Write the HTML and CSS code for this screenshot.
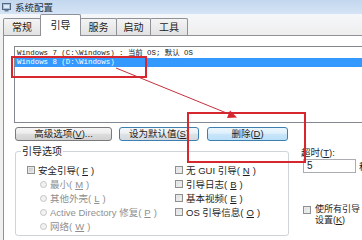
FILE: index.html
```html
<!DOCTYPE html>
<html lang="zh-CN">
<head>
    <meta charset="UTF-8">
    <title>系统配置</title>
    <link rel="stylesheet" href="styles.css">
</head>
<body>
    <div class="window">
        <div class="titlebar">
            <svg class="app-icon" width="9" height="9" viewBox="0 0 9 9">
                <rect x="0.5" y="0.5" width="8" height="6" fill="#9fbfdf" stroke="#56677d"/>
                <rect x="2" y="2" width="5" height="3" fill="#dbe9f7"/>
                <rect x="2.5" y="7" width="4" height="1.5" fill="#6d7f95"/>
            </svg>
            <span class="title">系统配置</span>
        </div>

        <div class="tabs">
            <div class="tab t1">常规</div>
            <div class="tab t2 active">引导</div>
            <div class="tab t3">服务</div>
            <div class="tab t4">启动</div>
            <div class="tab t5">工具</div>
        </div>

        <div class="panel">
            <div class="os-list">
                <div class="os-item">Windows 7 (C:\Windows) : 当前 OS; 默认 OS</div>
                <div class="os-item selected">Windows 8 (D:\Windows)</div>
            </div>

            <div class="button-row">
                <button class="btn btn-advanced">高级选项(<u>V</u>)...</button>
                <button class="btn btn-default">设为默认值(<u>S</u>)</button>
                <button class="btn btn-hot">删除(<u>D</u>)</button>
            </div>

            <div class="lower">
                <fieldset class="group">
                    <legend>引导选项</legend>
                    <div class="opt-grid">
                        <div class="col">
                            <div class="opt"><span class="check"></span>安全引导(<u>F</u>)</div>
                            <div class="opt sub disabled"><span class="radio"></span>最小(<u>M</u>)</div>
                            <div class="opt sub disabled"><span class="radio"></span>其他外壳(<u>L</u>)</div>
                            <div class="opt sub disabled"><span class="radio"></span>Active Directory 修复(<u>P</u>)</div>
                            <div class="opt sub disabled"><span class="radio"></span>网络(<u>W</u>)</div>
                        </div>
                        <div class="col">
                            <div class="opt"><span class="check light"></span>无 GUI 引导(<u>N</u>)</div>
                            <div class="opt"><span class="check light"></span>引导日志(<u>B</u>)</div>
                            <div class="opt"><span class="check light"></span>基本视频(<u>E</u>)</div>
                            <div class="opt"><span class="check light"></span>OS 引导信息(<u>O</u>)</div>
                        </div>
                    </div>
                </fieldset>

                <div class="side">
                    <div class="timeout-label">超时(<u>T</u>):</div>
                    <div class="timeout-row">
                        <div class="textbox">5</div>
                        <span class="unit">秒</span>
                    </div>
                    <div class="persist">
                        <span class="check light"></span>
                        <span class="persist-text">使所有引导设置(<u>K</u>)</span>
                    </div>
                </div>
            </div>
        </div>

        <!-- red marks drawn over the screenshot -->
        <svg class="annotations" width="362" height="240" viewBox="0 0 362 240">
            <rect x="12" y="57" width="134" height="20" fill="none" stroke="#d8262f" stroke-width="2"/>
            <rect x="188" y="113" width="117" height="49" fill="none" stroke="#d8262f" stroke-width="2"/>
            <line x1="116" y1="68" x2="229" y2="114" stroke="#c4313e" stroke-width="1"/>
            <polygon points="237,117.5 227,118 230,110.5" fill="#d8262f"/>
        </svg>
    </div>
</body>
</html>
```

FILE: styles.css
```css
* {
    box-sizing: border-box;
}

body {
    margin: 0;
    background: #f0f0f0;
    font-family: "Liberation Sans", "Noto Sans CJK SC", sans-serif;
    font-size: 9.5px;
    color: #1e1e1e;
}

u {
    text-decoration: underline;
}

.window {
    width: 362px;
    height: 240px;
    overflow: hidden;
    position: relative;
    background: #f0f0f0;
}

/* title bar */
.titlebar {
    height: 14px;
    display: flex;
    align-items: center;
    gap: 4px;
    padding-left: 2px;
    background: linear-gradient(to bottom, #c3d7ee, #d5e4f5);
}

.title {
    font-family: "Noto Sans CJK SC", sans-serif;
    font-size: 9.5px;
    color: #24303f;
    line-height: 14px;
}

/* tabs */
.tabs {
    display: flex;
    align-items: flex-end;
    height: 21px;
    padding-left: 3px;
    background: linear-gradient(to bottom, #f5f7fa, #eeeeee);
}

.tab {
    height: 17px;
    border: 1px solid #8e9198;
    border-bottom: none;
    border-radius: 2px 2px 0 0;
    margin-right: -1px;
    background: linear-gradient(to bottom, #f4f4f4, #e2e2e2);
    font-family: "Noto Sans CJK SC", sans-serif;
    font-size: 10px;
    line-height: 15px;
    text-align: center;
    color: #222;
}

.tab.active {
    height: 22px;
    margin-bottom: -1px;
    position: relative;
    z-index: 1;
    background: #fff;
    line-height: 19px;
}

.t1 { width: 38px; }
.t2 { width: 41px; }
.t3 { width: 37px; }
.t4 { width: 35px; }
.t5 { width: 38px; }

/* tab page */
.panel {
    width: 420px;
    height: 205px;
    margin-left: 3px;
    padding: 10px 0 0 10px;
    background: #fff;
    border-top: 1px solid #8e9198;
    border-left: 1px solid #8e9198;
}

.os-list {
    width: 400px;
    height: 77px;
    padding-top: 2px;
    border: 1px solid #828790;
    font-family: "Liberation Mono", "Noto Sans CJK SC", monospace;
    font-size: 7.4px;
}

.os-item {
    height: 9px;
    line-height: 9px;
    padding-left: 2px;
    white-space: nowrap;
    color: #222;
}

.os-item.selected {
    background: #3399ff;
    color: #fff;
}

/* buttons */
.button-row {
    display: flex;
    margin-top: 4px;
    padding-left: 1px;
}

.btn {
    height: 14px;
    padding: 0;
    border: 1px solid #7a7a7a;
    border-radius: 3px;
    background: linear-gradient(to bottom, #f6f6f6 0%, #ececec 45%, #dddddd 50%, #d2d2d2 100%);
    font-family: "Liberation Sans", "Noto Sans CJK SC", sans-serif;
    font-size: 9.5px;
    line-height: 12px;
    color: #1e1e1e;
}

.btn-advanced {
    width: 97px;
}

.btn-default {
    width: 80px;
    margin-left: 7px;
    border-color: #3c7fb1;
    background: linear-gradient(to bottom, #f6f8fa 0%, #eceff2 45%, #dde2e6 50%, #d3d9de 100%);
}

.btn-hot {
    width: 81px;
    margin-left: 8px;
    border-color: #3c7fb1;
    background: linear-gradient(to bottom, #eef7fd 0%, #ddeffb 45%, #c9e6fa 50%, #bcdff8 100%);
}

/* lower area */
.lower {
    display: flex;
    align-items: flex-start;
    margin-top: 4px;
}

.group {
    width: 274px;
    margin: 0 0 0 1px;
    padding: 6px 0 2px 11px;
    border: 1px solid #cdd5db;
    border-radius: 3px;
}

.group legend {
    margin-left: -6px;
    padding: 0 1px;
    line-height: 12px;
    font-family: "Noto Sans CJK SC", sans-serif;
    font-size: 10px;
    color: #222;
}

.opt-grid {
    display: grid;
    grid-template-columns: 148px 1fr;
}

.opt {
    display: flex;
    align-items: center;
    gap: 3px;
    height: 14px;
    white-space: nowrap;
}

.opt.sub {
    padding-left: 13px;
}

.opt.disabled {
    color: #8f8f8f;
}

.check {
    width: 8px;
    height: 8px;
    flex: none;
    border: 1px solid #8e8f8f;
    background: linear-gradient(135deg, #b9bdc3, #eeeeee);
    box-shadow: inset 0 0 0 1px #e9e9e9;
}

.check.light {
    background: linear-gradient(135deg, #d7dade, #f6f6f6);
}

.radio {
    width: 7px;
    height: 7px;
    flex: none;
    border: 1px solid #c4c4c4;
    border-radius: 50%;
    background: #f2f2f2;
}

/* timeout column */
.side {
    margin-left: 12px;
    padding-top: 2px;
}

.timeout-label {
    line-height: 12px;
    white-space: nowrap;
}

.timeout-row {
    display: flex;
    align-items: center;
    gap: 3px;
    margin-left: 2px;
}

.textbox {
    width: 53px;
    height: 14px;
    padding-left: 3px;
    border: 1px solid #abadb3;
    line-height: 12px;
    font-size: 10px;
    background: #fff;
}

.unit {
    white-space: nowrap;
}

.persist {
    display: flex;
    align-items: flex-start;
    gap: 4px;
    margin: 31px 0 0 2px;
}

.persist .check {
    margin-top: 2px;
}

.persist-text {
    width: 47px;
    font-size: 9px;
    line-height: 10.5px;
}

.annotations {
    position: absolute;
    top: 0;
    left: 0;
    pointer-events: none;
}
```
